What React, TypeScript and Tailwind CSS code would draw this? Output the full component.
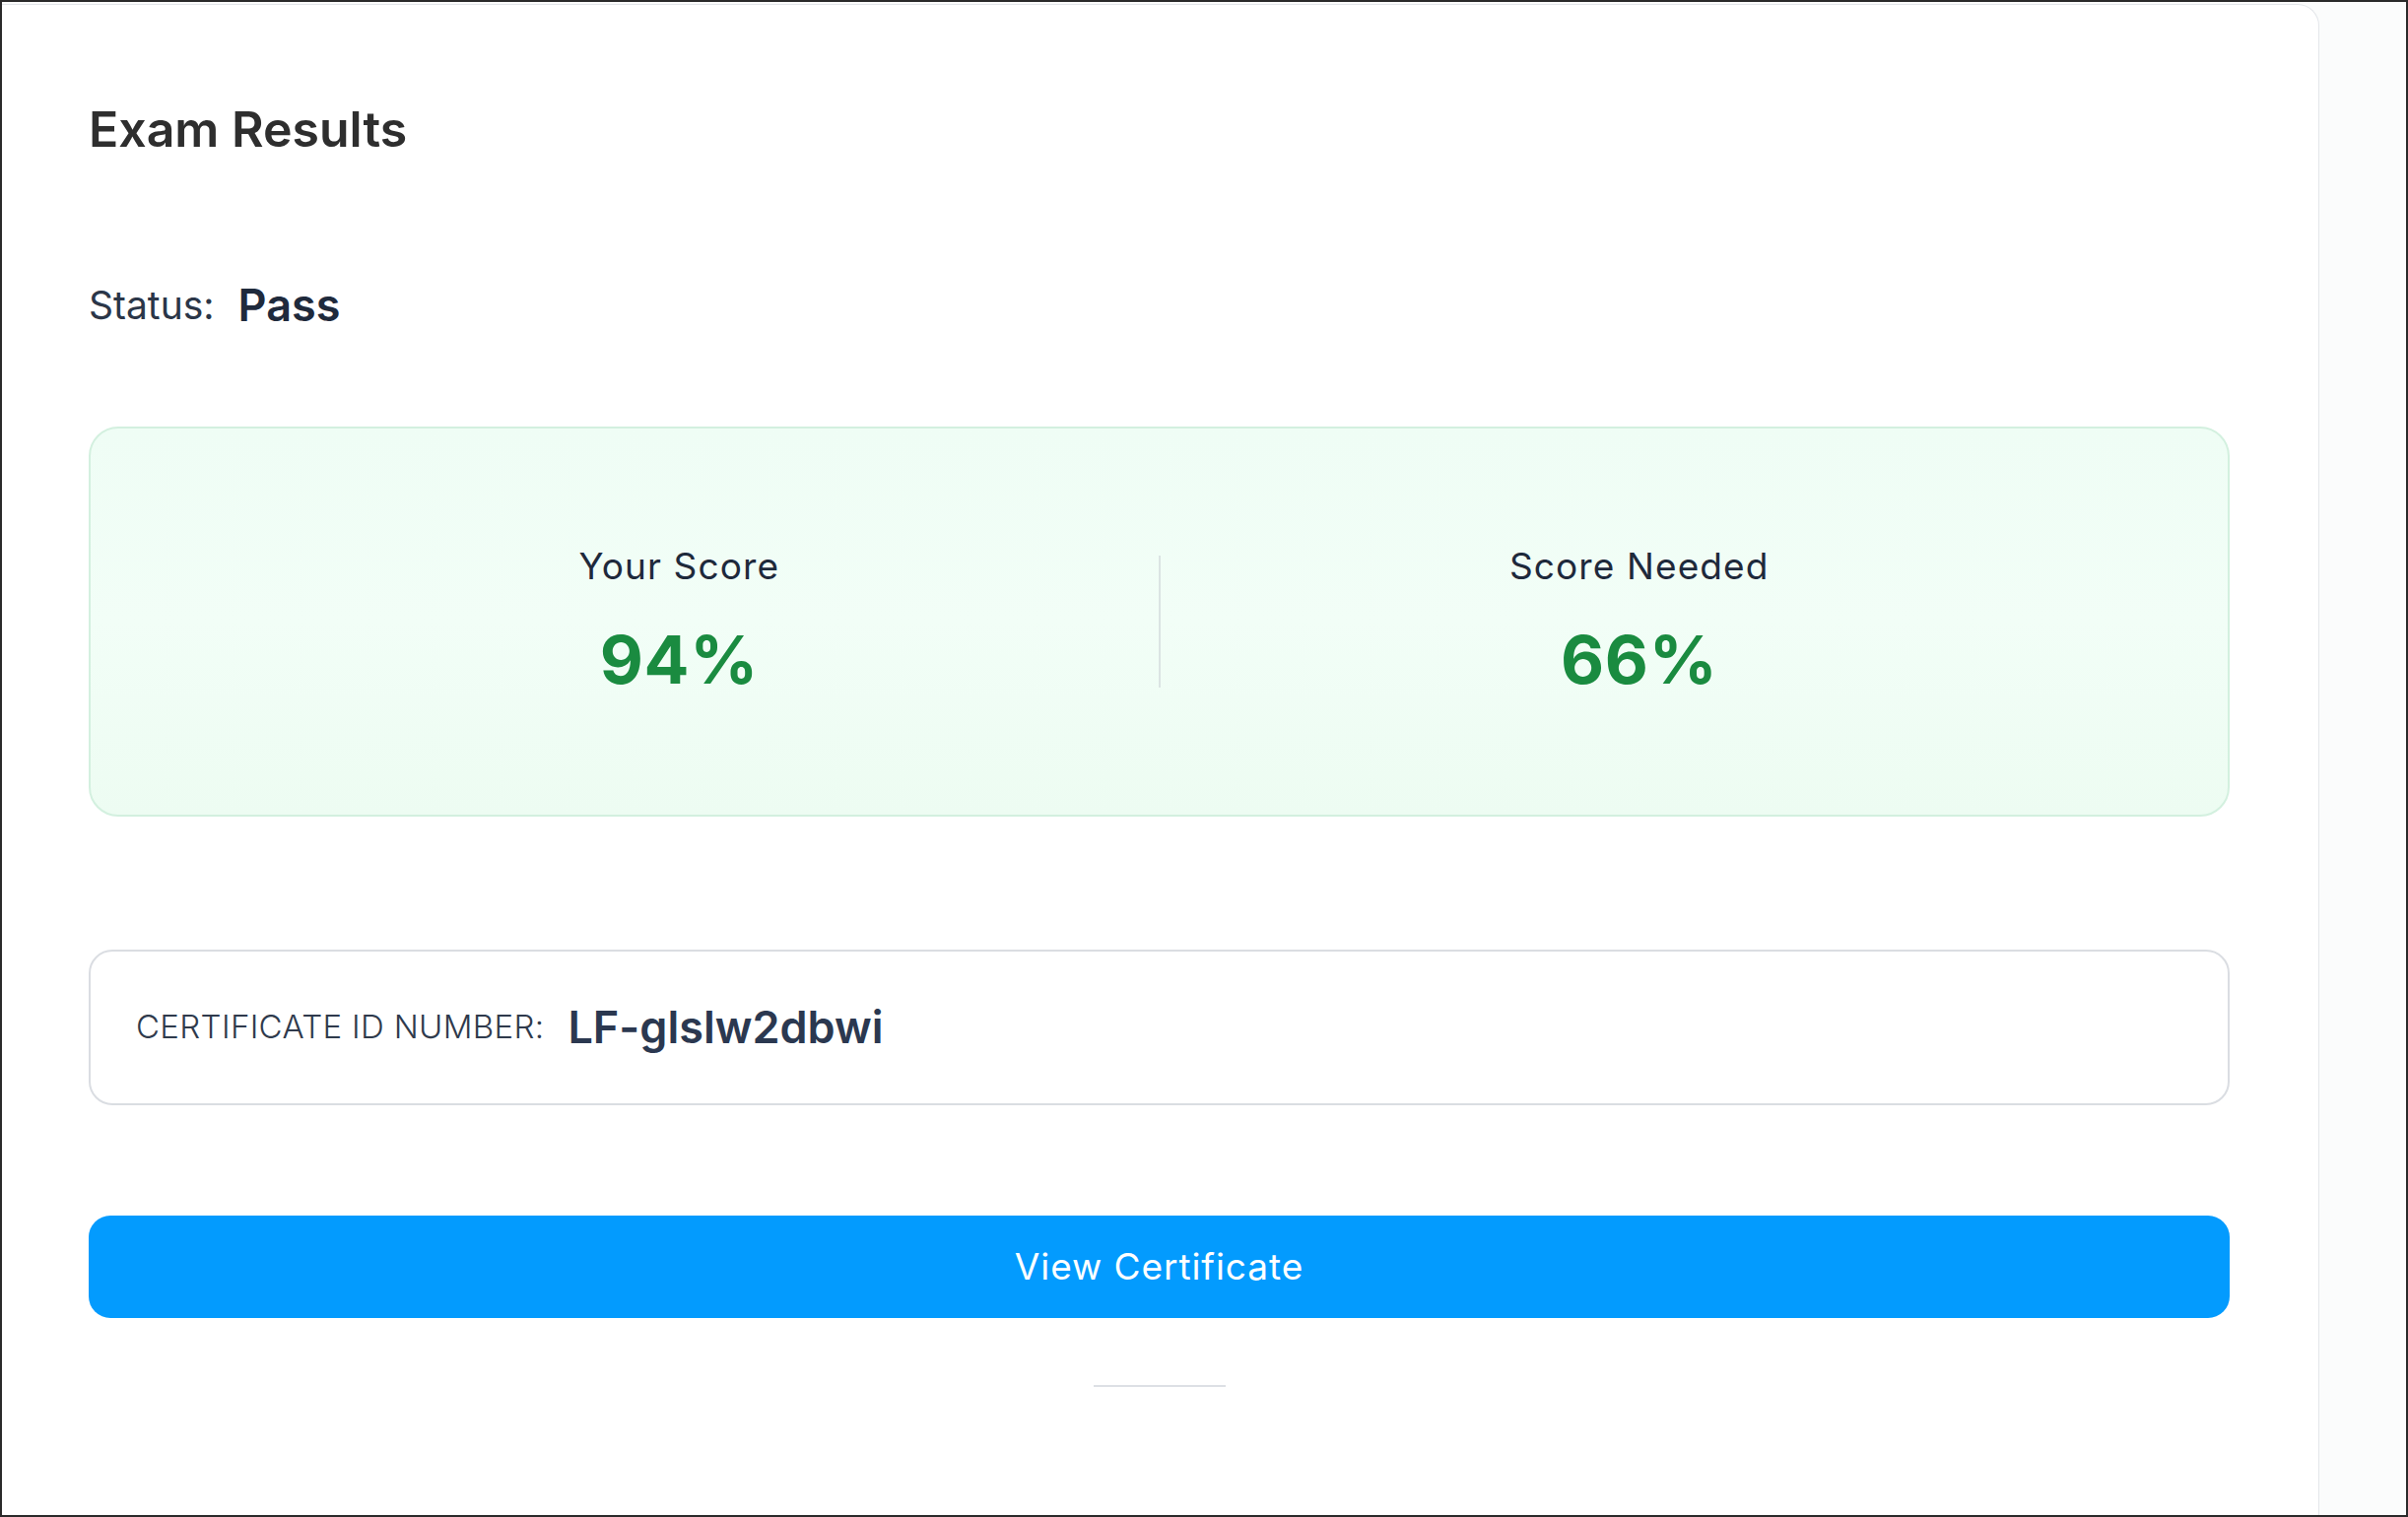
import React from "react";

const font = { fontFamily: "Inter, 'Noto Sans', sans-serif" };

function ScoreColumn({ label, value }: { label: string; value: string }) {
  return (
    <div className="flex flex-1 flex-col items-center justify-center">
      <div className="text-[37px] leading-[44px] font-normal tracking-[0.03em] text-[#1e293b]">{label}</div>
      <div className="mt-[32px] text-[68px] leading-[80px] font-bold tracking-[0.01em] text-[#1a8b40]">{value}</div>
    </div>
  );
}

export default function App() {
  return (
    <div
      className="flex h-[1540px] w-[2444px] overflow-hidden border-2 border-[#2a2a2a] bg-[#fbfcfc]"
      style={font}
    >
      <div className="mt-[2px] flex h-[1600px] w-[2352px] shrink-0 flex-col rounded-tr-[22px] border-t border-r border-[#e3e6ea] bg-white pt-[96px] pl-[88px]">
        <div className="w-[2173px]">
          <h1 className="h-[60px] text-[50px] leading-[60px] font-semibold text-[#2e2e2e]">Exam Results</h1>

          <div className="mt-[124px] flex h-[50px] items-center gap-[24px]">
            <span className="text-[39px] font-normal text-[#2b3648]">Status:</span>
            <span className="text-[45px] font-semibold text-[#1f2a3c]">Pass</span>
          </div>

          <div className="mt-[98px] flex h-[396px] items-center rounded-[30px] border-2 border-[#d3f0df] bg-gradient-to-b from-[#effdf5] via-[#f2fef7] to-[#edfcf2] px-[111px]">
            <ScoreColumn label="Your Score" value="94%" />
            <div className="h-[134px] w-[2px] bg-[#dbe4e3]" />
            <ScoreColumn label="Score Needed" value="66%" />
          </div>

          <div className="mt-[135px] flex h-[158px] items-center gap-[24px] rounded-[24px] border-2 border-[#dadde2] bg-white pl-[46px]">
            <span className="text-[33px] font-light tracking-[0.01em] text-[#2f3a4c]">CERTIFICATE ID NUMBER:</span>
            <span className="text-[45px] font-semibold text-[#2b3850]">LF-glslw2dbwi</span>
          </div>

          <button className="mt-[112px] flex h-[104px] w-full items-center justify-center rounded-[22px] bg-[#039bfe] text-[37px] font-normal tracking-[0.025em] text-white">
            View Certificate
          </button>

          <div className="mx-auto mt-[68px] h-[2px] w-[134px] bg-[#dde0e5]" />
        </div>
      </div>
    </div>
  );
}
